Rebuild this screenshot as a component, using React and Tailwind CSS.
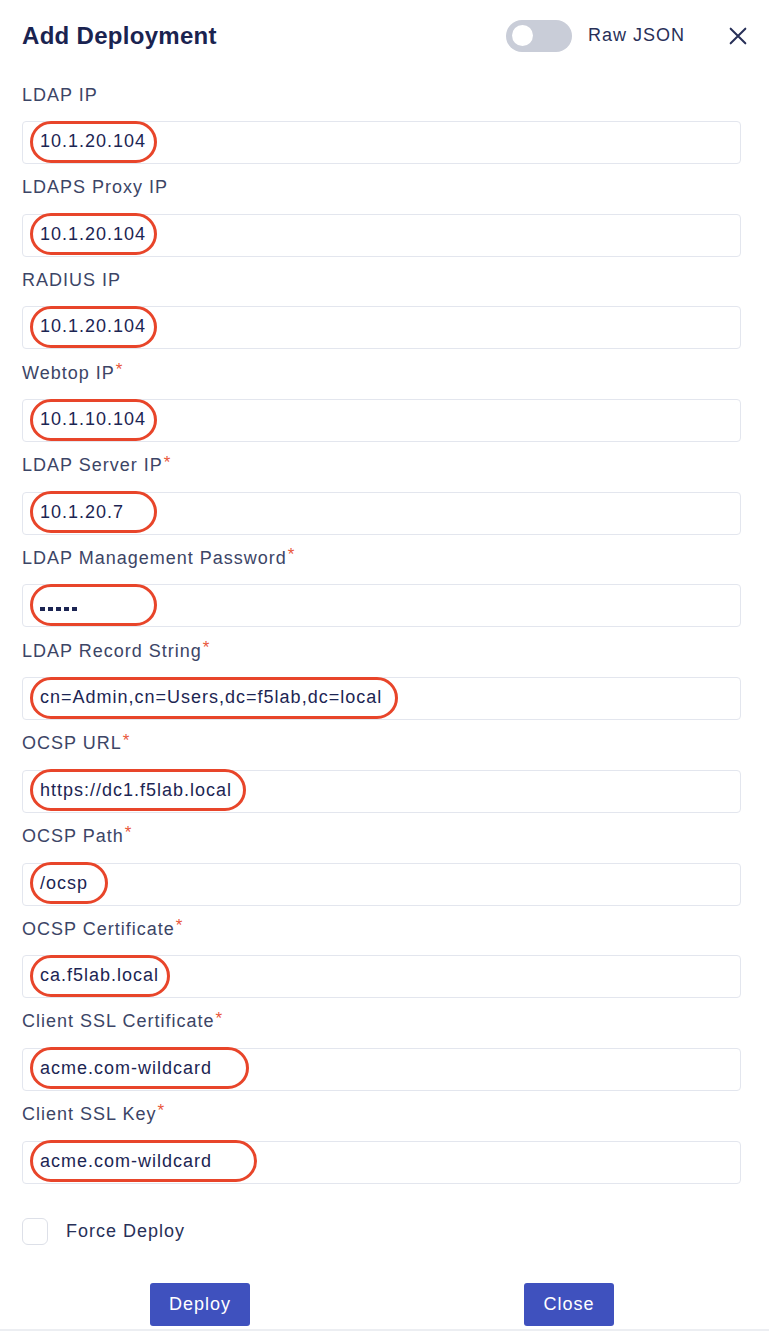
import React, { useState } from 'react';

const fields = [
  { label: 'LDAP IP', value: '10.1.20.104', ring: 'w-[127px]' },
  { label: 'LDAPS Proxy IP', value: '10.1.20.104', ring: 'w-[127px]' },
  { label: 'RADIUS IP', value: '10.1.20.104', ring: 'w-[127px]' },
  { label: 'Webtop IP', value: '10.1.10.104', ring: 'w-[127px]', required: true },
  { label: 'LDAP Server IP', value: '10.1.20.7', ring: 'w-[127px]', required: true },
  { label: 'LDAP Management Password', value: '•••••', ring: 'w-[127px]', required: true, password: true },
  { label: 'LDAP Record String', value: 'cn=Admin,cn=Users,dc=f5lab,dc=local', ring: 'w-[368px]', required: true },
  { label: 'OCSP URL', value: 'https://dc1.f5lab.local', ring: 'w-[216px]', required: true },
  { label: 'OCSP Path', value: '/ocsp', ring: 'w-[78px]', required: true },
  { label: 'OCSP Certificate', value: 'ca.f5lab.local', ring: 'w-[140px]', required: true },
  { label: 'Client SSL Certificate', value: 'acme.com-wildcard', ring: 'w-[219px]', required: true },
  { label: 'Client SSL Key', value: 'acme.com-wildcard', ring: 'w-[227px]', required: true },
];

function Field({ label, value, ring, required, password }) {
  return (
    <div>
      <div className="h-6 flex items-center text-[18px] tracking-[1px] text-[#3c4566]">
        {label}
        {required && <span className="text-[#e9573b] ml-[1px] -mt-[7px] text-[17px]">*</span>}
      </div>
      <div className="mt-[14px] h-[43px] border border-[#e3e6ee] rounded-[4px] flex items-center pl-[7px]">
        <span
          className={`${ring} h-[42px] -mt-[2px] border-[3px] border-[#e8452a] rounded-full flex items-center pl-[7px] text-[18px] tracking-[1px] text-[#1c2553] whitespace-nowrap`}
        >
          {password ? (
            <span className="flex gap-[3.5px] mt-[8px]" aria-label={value}>
              {[0, 1, 2, 3, 4].map((i) => (
                <span key={i} className="w-[4.5px] h-[4.5px] bg-[#1c2553] block" />
              ))}
            </span>
          ) : (
            value
          )}
        </span>
      </div>
    </div>
  );
}

export default function App() {
  const [raw, setRaw] = useState(false);
  const [force, setForce] = useState(false);

  return (
    <div className="w-[769px] h-[1331px] bg-white overflow-hidden relative font-['Liberation_Sans',Arial,sans-serif]">
      <div className="pl-[22px] pr-[28px]">
        {/* header */}
        <div className="h-[70px] flex items-center pt-[1px]">
          <h1 className="text-[24px] font-bold tracking-[0.3px] text-[#1a2350]">Add Deployment</h1>
          <div className="ml-auto flex items-center">
            <button
              onClick={() => setRaw(!raw)}
              className="w-[66px] h-[32px] rounded-full bg-[#c9cdd8] flex items-center px-[6px]"
            >
              <span className="w-[21px] h-[21px] rounded-full bg-white block" />
            </button>
            <span className="ml-[16px] text-[18px] tracking-[1px] text-[#283058]">Raw JSON</span>
            <button className="ml-[42px] -mr-[8px] text-[#283058]">
              <svg width="22" height="22" viewBox="0 0 24 24" fill="none" stroke="currentColor" strokeWidth="2.2" strokeLinecap="round">
                <path d="M4 4 L20 20 M20 4 L4 20" />
              </svg>
            </button>
          </div>
        </div>

        {/* form */}
        <div className="mt-[13px] flex flex-col gap-[11.7px]">
          {fields.map((f) => (
            <Field key={f.label} {...f} />
          ))}
        </div>

        {/* force deploy */}
        <label className="mt-[34px] flex items-center">
          <input type="checkbox" checked={force} onChange={() => setForce(!force)} className="sr-only" />
          <span className="w-[26px] h-[27px] border border-[#dde0e8] rounded-[6px] block" />
          <span className="ml-[18px] text-[18px] tracking-[1px] text-[#283058]">Force Deploy</span>
        </label>

        {/* actions */}
        <div className="mt-[38px] flex">
          <button className="ml-[128px] w-[100px] h-[43px] bg-[#3f51be] text-white text-[18px] tracking-[1px] rounded-[3px]">
            Deploy
          </button>
          <button className="ml-[274px] w-[90px] h-[43px] bg-[#3f51be] text-white text-[18px] tracking-[1px] rounded-[3px]">
            Close
          </button>
        </div>
      </div>
      <div className="absolute left-0 right-0 top-[1329px] h-[2px] bg-[#eceef2]" />
    </div>
  );
}
